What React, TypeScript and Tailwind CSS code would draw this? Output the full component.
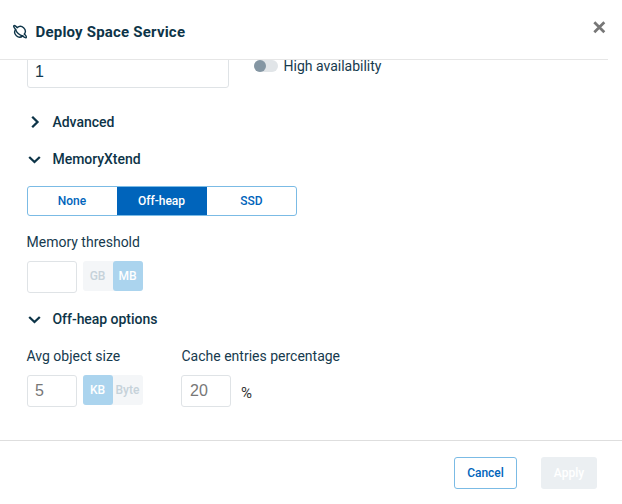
import React from "react";

const label = "-ml-[0.5px] whitespace-nowrap text-[14px] leading-[20px] text-[#163a4e]";
const field =
  "flex h-8 items-center rounded-[3px] border border-[#dfe3e6] bg-white pl-[7px] font-['Liberation_Sans',sans-serif] text-[16px]";

function Chevron({ open }: { open?: boolean }) {
  return (
    <svg width="16" height="16" viewBox="0 0 16 16" fill="none" stroke="#0d3448" strokeWidth="2.3">
      <path d={open ? "M2.2 6L7.500 11L12.8 6" : "M5.200 2.7L10.5 8L5.200 13.3"} />
    </svg>
  );
}

function Section({ title, open }: { title: string; open?: boolean }) {
  return (
    <div className="flex h-5 items-center gap-[10px]">
      <Chevron open={open} />
      <span className="-ml-[0.5px] whitespace-nowrap text-[14px] font-medium tracking-[-0.04px] text-[#0d3448]">{title}</span>
    </div>
  );
}

function Units({ items, active }: { items: string[]; active: number }) {
  return (
    <div className="flex h-[30px] rounded-[3px] bg-[#f4f6f8] text-[12px] font-medium">
      {items.map((item, i) => (
        <span
          key={item}
          className={
            i === active
              ? "flex w-[30px] items-center justify-center rounded-[3px] bg-[#abd4ee] pr-px text-white"
              : "flex w-[30px] items-center justify-center pr-px text-[#c6d2da]"
          }
        >
          {item}
        </span>
      ))}
    </div>
  );
}

export default function App() {
  return (
    <div className="flex h-[504px] w-[622px] flex-col overflow-hidden bg-white font-['Roboto',sans-serif]">
      <header className="flex h-[60px] shrink-0 items-start">
        <div className="flex h-[60px] w-[608px] items-center border-b border-[#e6e6e6] pt-[5px] pl-3">
          <svg width="16" height="16" viewBox="0 0 16 16" fill="none" stroke="#0d3448" strokeWidth="1.4" strokeLinecap="round">
            <path d="M5.200 3.600A4.900 4.900 0 0 1 12.400 10.100M10.800 11.900A4.900 4.900 0 0 1 3.600 5.400" />
            <path d="M5.200 3.600C3.800 2.200 2.400 1.200 1.900 1.700C1.400 2.200 2.200 4 3.600 5.400C4.200 8 7.500 11.600 10.800 11.900C12.200 13.300 13.600 14.200 14.100 13.700C14.600 13.200 13.800 11.600 12.400 10.100" />
          </svg>
          <h1 className="ml-2 -translate-x-[0.5px] whitespace-nowrap text-[15px] font-bold tracking-[0.2px] text-[#0d3448]">Deploy Space Service</h1>
          <svg className="mr-[2px] mb-[11px] ml-auto" width="14" height="14" viewBox="0 0 14 14" stroke="#777" strokeWidth="2.7">
            <path d="M2.300 2.300L12.300 12.300M12.300 2.300L2.300 12.300" />
          </svg>
        </div>
      </header>
      <main className="h-[380px] overflow-hidden pl-[27px]">
        <div className="-mt-1 flex items-start">
          <div className={`${field} w-[202px] text-[#163a4e]`}>1</div>
          <div className="ml-[25px] flex h-5 items-center">
            <div className="h-3 w-6 rounded-full bg-[#e1e5e8]">
              <div className="h-3 w-3 rounded-full bg-[#8496a3]" />
            </div>
            <span className="ml-[5.5px] whitespace-nowrap text-[14px] leading-5 text-[#163a4e]">High availability</span>
          </div>
        </div>
        <div className="mt-6"><Section title="Advanced" /></div>
        <div className="mt-[17px]"><Section title="MemoryXtend" open /></div>
        <div className="mt-[17px] flex h-[30px] w-[270px] overflow-hidden rounded-[3px] border border-[#7bbbe5] text-[12px] font-medium text-[#0064bb]">
          <span className="flex w-[89px] items-center justify-center pr-px">None</span>
          <span className="flex w-[90px] items-center justify-center bg-[#0064bb] pr-px text-white">Off-heap</span>
          <span className="flex flex-1 items-center justify-center">SSD</span>
        </div>
        <div className={`${label} mt-4`}>Memory threshold</div>
        <div className="mt-[9px] flex items-start gap-[6px]">
          <div className={`${field} w-[50px]`} />
          <Units items={["GB", "MB"]} active={1} />
        </div>
        <div className="mt-4"><Section title="Off-heap options" open /></div>
        <div className="mt-[17px] flex">
          <div className="w-[154px]">
            <div className={label}>Avg object size</div>
            <div className="mt-[9px] flex items-start gap-[6px]">
              <div className={`${field} w-[50px] text-[#777]`}>5</div>
              <Units items={["KB", "Byte"]} active={0} />
            </div>
          </div>
          <div>
            <div className="whitespace-nowrap pl-[0.5px] text-[14px] leading-[20px] text-[#163a4e]">Cache entries percentage</div>
            <div className="mt-[9px] flex items-start gap-[10px]">
              <div className={`${field} w-[50px] text-[#777]`}><span className="ml-px">20</span></div>
              <span className="pt-2 text-[15px] leading-5 text-[#333]">%</span>
            </div>
          </div>
        </div>
      </main>
      <footer className="flex h-16 items-start justify-end gap-6 border-t border-[#dedede] pt-4 pr-[25px] text-[12px] font-medium">
        <button className="h-8 w-[63px] rounded-[3px] border border-[#7bbbe5] text-[#0064bb]">Cancel</button>
        <button className="h-8 w-14 rounded-[3px] bg-[#ebeff2] text-white">Apply</button>
      </footer>
    </div>
  );
}
